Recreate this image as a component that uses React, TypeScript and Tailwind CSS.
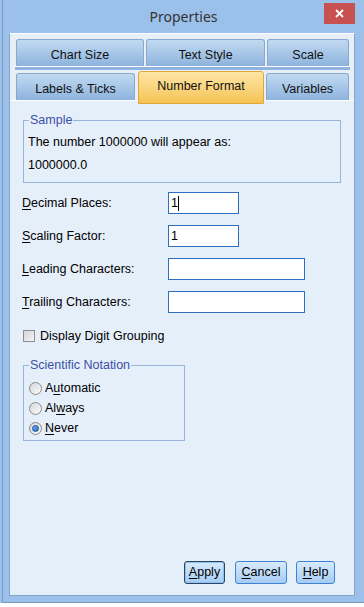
import React from 'react';

// underline the access-key letter at index `at`
const Mn = ({ text, at }: { text: string; at: number }) => (
  <>
    {text.slice(0, at)}
    <u className="underline-offset-[2px]">{text[at]}</u>
    {text.slice(at + 1)}
  </>
);

const Tab = ({ label, w }: { label: string; w: string }) => (
  <div
    className={`${w} h-[27px] rounded-t-[3px] border border-b-0 border-[#86a9d2] bg-gradient-to-b from-[#c2daf1] to-[#8db3dd] flex items-center justify-center pt-[5px] text-[#111]`}
  >
    {label}
  </div>
);

const TextBox = ({ w, value, caret }: { w: string; value?: string; caret?: boolean }) => (
  <div className={`${w} h-[22px] border border-[#2f6fbf] bg-white flex items-center pl-[2px]`}>
    {value}
    {caret && <span className="w-px h-[15px] bg-black" />}
  </div>
);

const Radio = ({ checked }: { checked?: boolean }) => (
  <div className="w-[13px] h-[13px] rounded-full border border-[#8b8b8b] bg-gradient-to-br from-[#d6d6d6] to-[#fbfbfb] flex items-center justify-center">
    {checked && (
      <div className="w-[7px] h-[7px] rounded-full border border-[#1d4f9c] bg-gradient-to-br from-[#7fb2ee] to-[#2a69c4]" />
    )}
  </div>
);

const Button = ({ text, at, w, primary }: { text: string; at: number; w: string; primary?: boolean }) => (
  <div
    className={`${w} h-[23px] rounded-[3px] border flex items-center justify-center bg-gradient-to-b from-[#d7eafc] to-[#a5ccf3] ${
      primary ? 'border-[#2c4563] shadow-[inset_0_0_0_1px_#8fc0f2]' : 'border-[#3f82d2]'
    }`}
  >
    <Mn text={text} at={at} />
  </div>
);

export default function App() {
  return (
    <div className="w-[364px] h-[607px] bg-white font-['Liberation_Sans',Arial,sans-serif] text-[12.5px] text-black">
      <div className="h-[603px] bg-[#9bc0ea] pl-[2px]">
        <div className="h-full border-l border-b border-[#7a9ac5] flex flex-col">
          {/* title bar */}
          <div className="h-[33px] relative flex items-center justify-center">
            <span className="font-['Noto_Sans',sans-serif] text-[14px] text-[#333]">Properties</span>
            <div className="absolute right-[9px] top-[3px] w-[31px] h-[21px] bg-[#c75050] flex items-center justify-center">
              <svg width="9" height="9" viewBox="0 0 9 9">
                <path d="M1 1L8 8M8 1L1 8" stroke="white" strokeWidth="1.8" />
              </svg>
            </div>
          </div>

          <div className="ml-[6px] w-[346px] h-[563px] border border-[#86a5cd] border-t-white flex flex-col">
            {/* tabs */}
            <div className="bg-[#e9eff7] pt-[5px]">
              <div className="flex pl-[6px] gap-[2px]">
                <Tab label="Chart Size" w="w-[128px]" />
                <Tab label="Text Style" w="w-[119px]" />
                <Tab label="Scale" w="w-[82px]" />
              </div>
              <div className="ml-[5px] w-[335px] h-px bg-white" />
              <div className="ml-[5px] w-[335px] h-[3px] bg-[#8db3de]" />
              <div className="h-[3px]" />
              <div className="flex pl-[6px] h-[27px] items-start">
                <Tab label="Labels & Ticks" w="w-[119px]" />
                <div className="ml-[3px] relative z-10 -mt-[2px] w-[126px] h-[33px] rounded-t-[3px] border border-[#e0a63c] bg-gradient-to-b from-[#fde6a5] to-[#f5c352] flex items-center justify-center pb-[2px] text-[#111]">
                  Number Format
                </div>
                <div className="ml-[2px]">
                  <Tab label="Variables" w="w-[83px]" />
                </div>
              </div>
            </div>

            {/* body */}
            <div className="flex-1 border-t border-white bg-[#e5effa] flex flex-col">
              <fieldset className="mt-[12px] ml-[13px] w-[318px] h-[70px] border border-[#97b4d9] px-[4px]">
                <legend className="ml-[1px] px-[1px] leading-[14px] text-[#3d4fa6]">Sample</legend>
                <div className="pt-[8px] leading-[14px]">The number 1000000 will appear as:</div>
                <div className="mt-[9px] leading-[14px]">1000000.0</div>
              </fieldset>

              <div className="ml-[12px] mt-[9px] flex flex-col gap-[11px]">
                <div className="flex items-center h-[22px]">
                  <div className="w-[146px]"><Mn text="Decimal Places:" at={0} /></div>
                  <TextBox w="w-[71px]" value="1" caret />
                </div>
                <div className="flex items-center h-[22px]">
                  <div className="w-[146px]"><Mn text="Scaling Factor:" at={0} /></div>
                  <TextBox w="w-[71px]" value="1" />
                </div>
                <div className="flex items-center h-[22px]">
                  <div className="w-[146px]"><Mn text="Leading Characters:" at={0} /></div>
                  <TextBox w="w-[137px]" />
                </div>
                <div className="flex items-center h-[22px]">
                  <div className="w-[146px]"><Mn text="Trailing Characters:" at={0} /></div>
                  <TextBox w="w-[137px]" />
                </div>
              </div>

              <div className="mt-[17px] ml-[13px] h-[12px] flex items-center">
                <div className="w-[12px] h-[12px] border border-[#8e8e8e] bg-gradient-to-br from-[#d4d4d4] to-[#f6f6f6]" />
                <span className="ml-[5px]"><Mn text="Display Digit Grouping" at={10} /></span>
              </div>

              <fieldset className="mt-[16px] ml-[13px] w-[162px] h-[83px] border border-[#97b4d9] px-[4px]">
                <legend className="ml-[1px] px-[1px] leading-[14px] text-[#3d4fa6]">Scientific Notation</legend>
                <div className="pt-[6px] flex flex-col">
                  <div className="h-[20px] flex items-center ml-[1px]">
                    <Radio />
                    <span className="ml-[3px]"><Mn text="Automatic" at={1} /></span>
                  </div>
                  <div className="h-[20px] flex items-center ml-[1px]">
                    <Radio />
                    <span className="ml-[3px]"><Mn text="Always" at={2} /></span>
                  </div>
                  <div className="h-[20px] flex items-center ml-[1px]">
                    <Radio checked />
                    <span className="ml-[3px]"><Mn text="Never" at={0} /></span>
                  </div>
                </div>
              </fieldset>

              <div className="mt-auto mb-[11px] mr-[19px] flex justify-end">
                <Button text="Apply" at={0} w="w-[41px]" primary />
                <div className="ml-[10px]"><Button text="Cancel" at={0} w="w-[52px]" /></div>
                <div className="ml-[9px]"><Button text="Help" at={0} w="w-[39px]" /></div>
              </div>
            </div>
          </div>
        </div>
      </div>
    </div>
  );
}
